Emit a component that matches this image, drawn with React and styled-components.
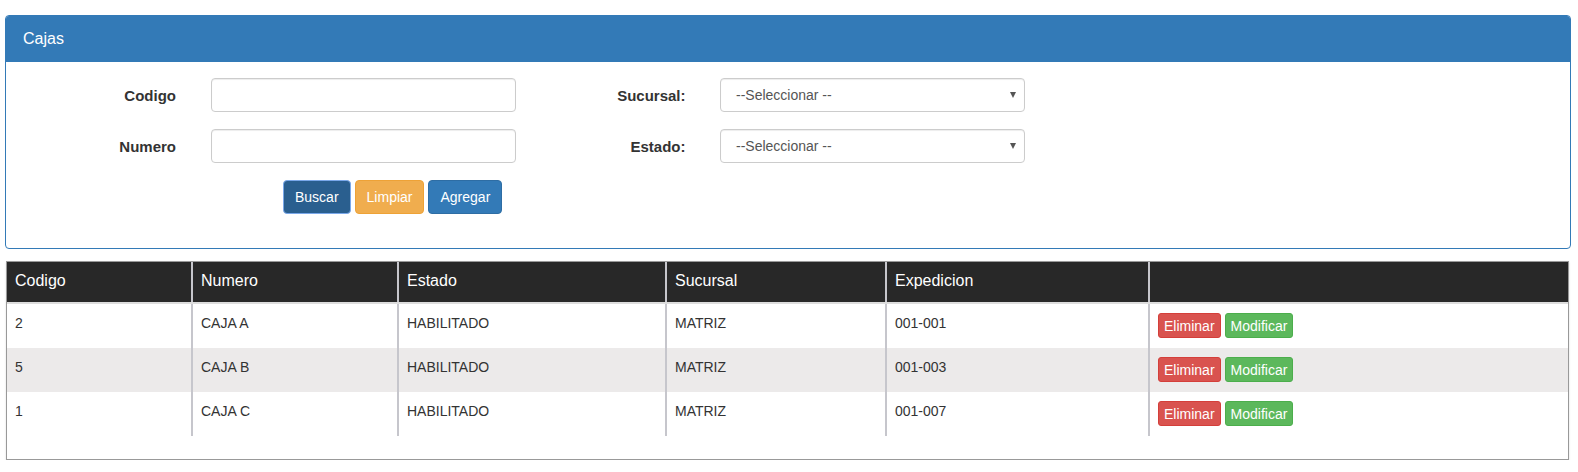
import React from "react";
import styled, { createGlobalStyle } from "styled-components";

const GlobalStyle = createGlobalStyle`
  * { box-sizing: border-box; }
  body {
    margin: 0;
    background: #fff;
    font-family: "Liberation Sans", Arial, sans-serif;
    font-size: 14px;
    color: #333;
  }
`;

const Page = styled.div`
  padding: 15px 7px 0 5px;
`;

const Panel = styled.section`
  border: 1px solid #337ab7;
  border-radius: 4px;
  background: #fff;
`;

const PanelHeading = styled.div`
  height: 46px;
  padding: 0 17px;
  display: flex;
  align-items: center;
  background: #337ab7;
  color: #fff;
  font-size: 16px;
  border-radius: 3px 3px 0 0;
`;

const PanelBody = styled.div`
  padding: 16px 0 34px;
`;

const FormGrid = styled.div`
  display: grid;
  grid-template-columns: 204.5px 305px 204.5px 305px;
  row-gap: 17px;
  align-items: center;
`;

const FieldLabel = styled.label`
  text-align: right;
  padding-right: 34.5px;
  font-weight: bold;
  font-size: 15px;
  color: #333;
`;

const TextInput = styled.input`
  height: 34px;
  width: 100%;
  border: 1px solid #ccc;
  border-radius: 4px;
  box-shadow: inset 0 1px 1px rgba(0, 0, 0, 0.075);
  padding: 6px 12px;
  font: inherit;
`;

const SelectBox = styled.div`
  height: 34px;
  border: 1px solid #ccc;
  border-radius: 4px;
  box-shadow: inset 0 1px 1px rgba(0, 0, 0, 0.075);
  padding: 0 8px 0 15px;
  display: flex;
  align-items: center;
  justify-content: space-between;
  color: #555;
  font-size: 14px;
`;

const Caret = styled.span`
  width: 0;
  height: 0;
  border-left: 3.5px solid transparent;
  border-right: 3.5px solid transparent;
  border-top: 6px solid #555;
`;

const ButtonRow = styled.div`
  display: flex;
  gap: 4px;
  margin: 17px 0 0 277px;
`;

const variants = {
  primary: { bg: "#337ab7", border: "#2e6da4" },
  active: { bg: "#2a5f8f", border: "#7aa8ea" },
  warning: { bg: "#f0ad4e", border: "#eea236" },
  danger: { bg: "#d9534f", border: "#d43f3a" },
  success: { bg: "#5cb85c", border: "#4cae4c" },
};

const Button = styled.button`
  height: ${(p) => (p.small ? "25px" : "34px")};
  padding: ${(p) => (p.small ? "0 5px" : "0 11px")};
  font-family: inherit;
  font-size: 14px;
  color: #fff;
  background: ${(p) => variants[p.variant].bg};
  border: 1px solid ${(p) => variants[p.variant].border};
  border-radius: ${(p) => (p.small ? "3px" : "4px")};
  cursor: pointer;
`;

const TableBox = styled.div`
  margin: 12px 2px 0 1px;
  border: 1px solid #999;
  box-shadow: 0 1px 2px rgba(0, 0, 0, 0.12);
  padding-bottom: 23px;
`;

const Table = styled.table`
  width: 100%;
  border-collapse: collapse;
  table-layout: fixed;
`;

const Th = styled.th`
  background: #282828;
  color: #fff;
  font-weight: normal;
  font-size: 16px;
  line-height: 22px;
  text-align: left;
  padding: 8px 8px 10px;
  border-bottom: 2px solid #ddd;
  border-left: ${(p) => (p.first ? "none" : "2px solid #c6c6cc")};
`;

const Tr = styled.tr`
  background: ${(p) => (p.striped ? "#eceaea" : "#fff")};
  & + & td {
    border-top: 1px solid #ddd;
  }
`;

const Td = styled.td`
  vertical-align: top;
  padding: 9px 8px 10px;
  line-height: 20px;
  font-size: 14px;
  color: #333;
  border-left: ${(p) => (p.first ? "none" : "2px solid #c6c6cc")};
`;

const Actions = styled.div`
  display: flex;
  gap: 4px;
`;

const columns = [
  { label: "Codigo", width: 185 },
  { label: "Numero", width: 206 },
  { label: "Estado", width: 268 },
  { label: "Sucursal", width: 220 },
  { label: "Expedicion", width: 263 },
  { label: "", width: undefined },
];

const rows = [
  { codigo: "2", numero: "CAJA A", estado: "HABILITADO", sucursal: "MATRIZ", exp: "001-001" },
  { codigo: "5", numero: "CAJA B", estado: "HABILITADO", sucursal: "MATRIZ", exp: "001-003" },
  { codigo: "1", numero: "CAJA C", estado: "HABILITADO", sucursal: "MATRIZ", exp: "001-007" },
];

export default function App() {
  return (
    <Page>
      <GlobalStyle />
      <Panel>
        <PanelHeading>Cajas</PanelHeading>
        <PanelBody>
          <FormGrid>
            <FieldLabel>Codigo</FieldLabel>
            <TextInput />
            <FieldLabel>Sucursal:</FieldLabel>
            <SelectBox>
              --Seleccionar --
              <Caret />
            </SelectBox>
            <FieldLabel>Numero</FieldLabel>
            <TextInput />
            <FieldLabel>Estado:</FieldLabel>
            <SelectBox>
              --Seleccionar --
              <Caret />
            </SelectBox>
          </FormGrid>
          <ButtonRow>
            <Button variant="active">Buscar</Button>
            <Button variant="warning">Limpiar</Button>
            <Button variant="primary">Agregar</Button>
          </ButtonRow>
        </PanelBody>
      </Panel>

      <TableBox>
        <Table>
          <colgroup>
            {columns.map((c, i) => (
              <col key={i} style={c.width ? { width: c.width } : undefined} />
            ))}
          </colgroup>
          <thead>
            <tr>
              {columns.map((c, i) => (
                <Th key={i} first={i === 0}>
                  {c.label}
                </Th>
              ))}
            </tr>
          </thead>
          <tbody>
            {rows.map((r, i) => (
              <Tr key={r.codigo} striped={i === 1}>
                <Td first>{r.codigo}</Td>
                <Td>{r.numero}</Td>
                <Td>{r.estado}</Td>
                <Td>{r.sucursal}</Td>
                <Td>{r.exp}</Td>
                <Td>
                  <Actions>
                    <Button small variant="danger">Eliminar</Button>
                    <Button small variant="success">Modificar</Button>
                  </Actions>
                </Td>
              </Tr>
            ))}
          </tbody>
        </Table>
      </TableBox>
    </Page>
  );
}
